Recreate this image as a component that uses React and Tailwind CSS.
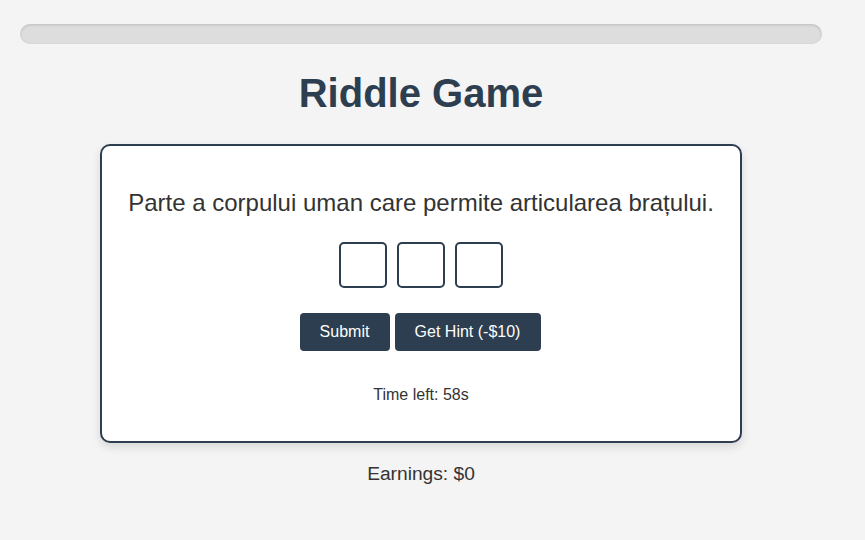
import { useState } from 'react';

const App = () => {
  const [letters, setLetters] = useState(['', '', '']);

  const updateLetter = (i, v) => {
    const next = [...letters];
    next[i] = v.slice(-1).toUpperCase();
    setLetters(next);
  };

  return (
    <div className="min-h-screen bg-[#f4f4f4] font-['Liberation_Sans',Arial,sans-serif] text-[#333]">
      <div className="w-[842px] px-5 pt-6 pb-10">
        {/* progress bar */}
        <div className="h-5 w-full rounded-full bg-[#dddddd] shadow-[inset_0_1px_3px_rgba(0,0,0,0.15)]" />

        <h1 className="mt-[26px] mb-[28px] text-center text-[40px] font-bold leading-[46px] text-[#2c3e50]">
          Riddle Game
        </h1>

        <div className="mx-auto w-[642px] rounded-[10px] border-2 border-[#2c3e50] bg-white px-5 pt-[43px] pb-[37px] text-center shadow-[0_4px_10px_rgba(0,0,0,0.12)]">
          <p className="text-[24px] leading-[27.6px] text-[#333]">
            Parte a corpului uman care permite articularea brațului.
          </p>

          <div className="mt-[25px] flex justify-center gap-[10px]">
            {letters.map((l, i) => (
              <input
                key={i}
                value={l}
                onChange={(e) => updateLetter(i, e.target.value)}
                maxLength={1}
                className="h-[46px] w-12 rounded-[5px] border-2 border-[#2c3e50] bg-white text-center text-[20px] outline-none"
              />
            ))}
          </div>

          <div className="mt-[25px] mr-[2px] flex justify-center gap-[5px]">
            <button className="h-[38px] w-[90px] rounded-[4px] bg-[#2c3e50] text-[16px] text-white">
              Submit
            </button>
            <button className="h-[38px] w-[146px] rounded-[4px] bg-[#2c3e50] text-[16px] text-white">
              Get Hint (-$10)
            </button>
          </div>

          <p className="mt-[35px] text-[16px] leading-[18.4px] text-[#333]">Time left: 58s</p>
        </div>

        <p className="mt-5 text-center text-[19.2px] leading-[22px] text-[#333]">Earnings: $0</p>
      </div>
    </div>
  );
};

export default App;
